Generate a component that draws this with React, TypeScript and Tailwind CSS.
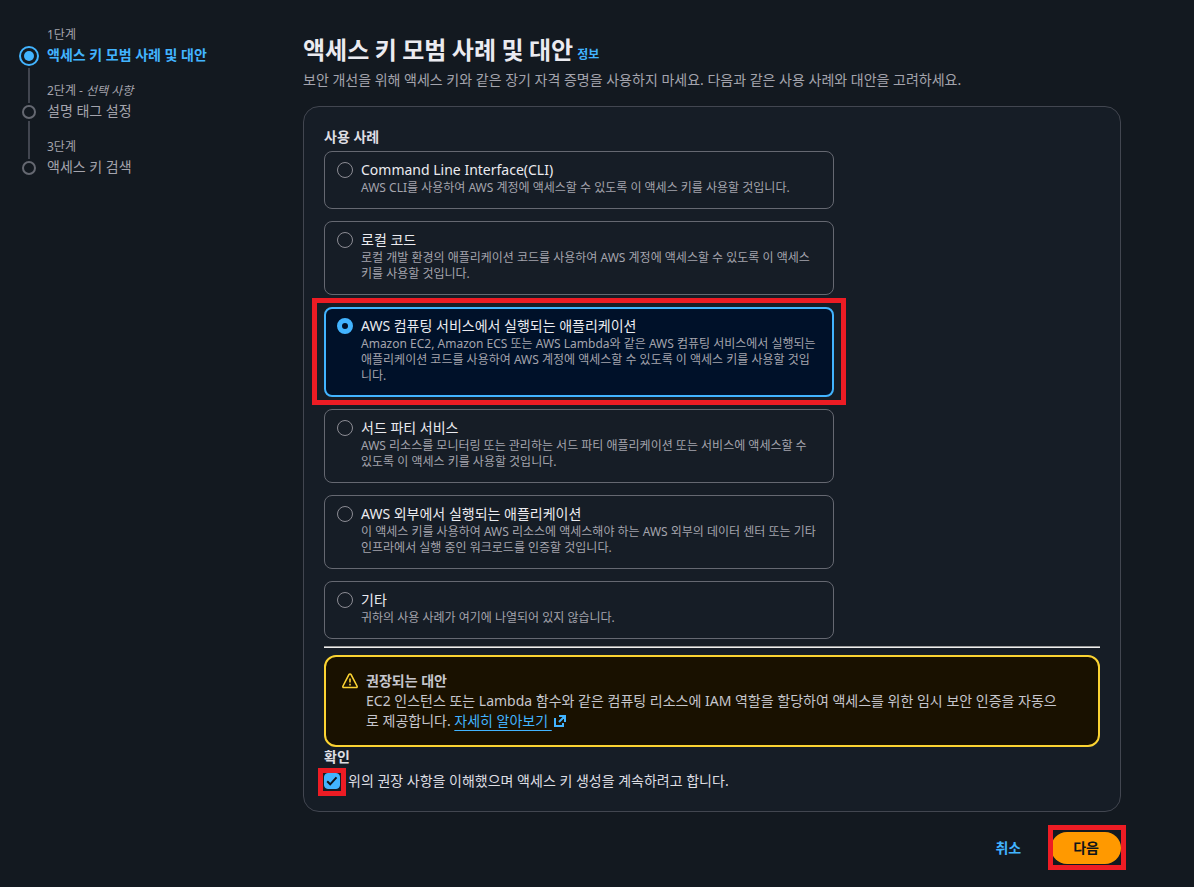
import React, { useState } from 'react';

const steps = [
    { label: '1단계', title: '액세스 키 모범 사례 및 대안', optional: false },
    { label: '2단계', title: '설명 태그 설정', optional: true },
    { label: '3단계', title: '액세스 키 검색', optional: false },
];

const useCases = [
    {
        id: 'cli',
        title: 'Command Line Interface(CLI)',
        description: 'AWS CLI를 사용하여 AWS 계정에 액세스할 수 있도록 이 액세스 키를 사용할 것입니다.',
    },
    {
        id: 'local',
        title: '로컬 코드',
        description: '로컬 개발 환경의 애플리케이션 코드를 사용하여 AWS 계정에 액세스할 수 있도록 이 액세스 키를 사용할 것입니다.',
    },
    {
        id: 'compute',
        title: 'AWS 컴퓨팅 서비스에서 실행되는 애플리케이션',
        description: 'Amazon EC2, Amazon ECS 또는 AWS Lambda와 같은 AWS 컴퓨팅 서비스에서 실행되는 애플리케이션 코드를 사용하여 AWS 계정에 액세스할 수 있도록 이 액세스 키를 사용할 것입니다.',
        highlighted: true,
    },
    {
        id: 'third-party',
        title: '서드 파티 서비스',
        description: 'AWS 리소스를 모니터링 또는 관리하는 서드 파티 애플리케이션 또는 서비스에 액세스할 수 있도록 이 액세스 키를 사용할 것입니다.',
    },
    {
        id: 'outside',
        title: 'AWS 외부에서 실행되는 애플리케이션',
        description: '이 액세스 키를 사용하여 AWS 리소스에 액세스해야 하는 AWS 외부의 데이터 센터 또는 기타 인프라에서 실행 중인 워크로드를 인증할 것입니다.',
    },
    {
        id: 'other',
        title: '기타',
        description: '귀하의 사용 사례가 여기에 나열되어 있지 않습니다.',
    },
];

const StepNav = () => (
    <nav aria-label="단계" className="w-[284px] shrink-0 pl-[19px] pt-[25px]">
        <ol>
            {steps.map((step, i) => {
                const active = i === 0;
                const last = i === steps.length - 1;
                return (
                    <li key={step.label} className="flex gap-2">
                        <div className="flex w-5 flex-col items-center">
                            {active ? (
                                <span className="mt-[21px] flex size-5 shrink-0 items-center justify-center rounded-full border-2 border-[#42b4ff]">
                                    <span className="size-2.5 rounded-full bg-[#42b4ff]" />
                                </span>
                            ) : (
                                <>
                                    <span className="h-[22px] w-0.5 shrink-0 bg-[#424650]" />
                                    <span className="mt-0.5 size-3.5 shrink-0 rounded-full border-2 border-[#656871]" />
                                </>
                            )}
                            {!last && <span className="mt-0.5 w-0.5 flex-1 bg-[#424650]" />}
                        </div>
                        <div className="pb-4">
                            <div className="text-xs leading-5 text-[#a4a4ad]">
                                {step.label}
                                {step.optional && <> - <i>선택 사항</i></>}
                            </div>
                            <div
                                aria-current={active ? 'step' : undefined}
                                className={`text-sm leading-5 ${active ? 'font-bold text-[#42b4ff]' : 'text-[#a4a4ad]'}`}
                            >
                                {step.title}
                            </div>
                        </div>
                    </li>
                );
            })}
        </ol>
    </nav>
);

const WarningIcon = () => (
    <svg viewBox="0 0 16 16" className="mt-0.5 size-4 shrink-0" fill="none" stroke="#fbd332" strokeWidth="1.6" aria-hidden="true">
        <path d="M6.9 1.6 1 13c-.4.8 0 1.5.8 1.5h12.4c.8 0 1.2-.7.8-1.5L9.1 1.6c-.5-.9-1.7-.9-2.2 0Z" />
        <path d="M8 5.5v4M8 10.8v1.8" />
    </svg>
);

const ExternalIcon = () => (
    <svg viewBox="0 0 16 16" className="inline size-4 align-[-3px]" fill="none" stroke="#42b4ff" strokeWidth="2" aria-hidden="true">
        <path d="M7 3h6v6M13 3 7 9M3 5v8h8v-3" />
    </svg>
);

const App = () => {
    const [selected, setSelected] = useState('compute');
    const [confirmed, setConfirmed] = useState(true);

    return (
        <div className="flex min-h-screen bg-[#131920] font-['Noto_Sans','Noto_Sans_CJK_KR',sans-serif] text-sm leading-5 text-[#dedee3]">
            <StepNav />

            <main className="mr-[73px] min-w-0 flex-1 pb-4 pl-[19px] pt-[34px]">
                <div className="flex items-baseline gap-1">
                    <h1 className="font-['Noto_Sans_CJK_KR',sans-serif] text-2xl leading-[30px] font-bold text-[#ebebf0]">액세스 키 모범 사례 및 대안</h1>
                    <a href="#info" className="text-xs font-bold text-[#42b4ff]">정보</a>
                </div>
                <p className="mt-1.5 text-[#a4a4ad]">
                    보안 개선을 위해 액세스 키와 같은 장기 자격 증명을 사용하지 마세요. 다음과 같은 사용 사례와 대안을 고려하세요.
                </p>

                <section className="mt-4 rounded-2xl border border-[#424650] bg-[#161d26] p-5">
                    <fieldset className="max-w-[510px]">
                        <legend className="mb-1 font-bold">사용 사례</legend>
                        <div className="flex flex-col gap-3">
                            {useCases.map((item) => {
                                const checked = selected === item.id;
                                return (
                                    <label
                                        key={item.id}
                                        className={`relative flex gap-2 rounded-lg ${
                                            checked
                                                ? 'border-2 border-[#42b4ff] bg-[#001129] pt-[7px] pr-[15px] pb-[11px] pl-[11px]'
                                                : 'border border-[#656871] pt-2 pr-4 pb-3 pl-3'
                                        }`}
                                    >
                                        <input
                                            type="radio"
                                            name="use-case"
                                            value={item.id}
                                            checked={checked}
                                            onChange={() => setSelected(item.id)}
                                            className="mt-0.5 size-4 shrink-0 appearance-none rounded-full border border-[#8c8c94] checked:border-[5px] checked:border-[#42b4ff]"
                                        />
                                        <span>
                                            <span className="block text-[#ebebf0]">{item.title}</span>
                                            <span className="block text-xs text-[#a4a4ad]">{item.description}</span>
                                        </span>
                                        {item.highlighted && (
                                            <span className="pointer-events-none absolute -inset-x-3.5 -top-[11px] -bottom-2.5 border-[5px] border-[#ed1c24]" />
                                        )}
                                    </label>
                                );
                            })}
                        </div>
                    </fieldset>

                    <hr className="my-[7px] h-0.5 border-t border-b border-t-[#9a9a9a] border-b-[#eeeeee]" />

                    <div className="flex gap-2 rounded-xl border-2 border-[#fbd332] bg-[#191100] py-3.5 pr-10 pl-4 text-[#c6c6cd]">
                        <WarningIcon />
                        <div>
                            <div className="font-bold">권장되는 대안</div>
                            <div>
                                EC2 인스턴스 또는 Lambda 함수와 같은 컴퓨팅 리소스에 IAM 역할을 할당하여 액세스를 위한 임시 보안 인증을 자동으로 제공합니다.{' '}
                                <a href="#learn-more" className="text-[#42b4ff] underline decoration-1 underline-offset-4">
                                    자세히 알아보기&nbsp;
                                    <ExternalIcon />
                                </a>
                            </div>
                        </div>
                    </div>

                    <div className="font-bold">확인</div>
                    <label className="mt-1 flex gap-2">
                        <span className="relative mt-0.5 size-4 shrink-0">
                            <input
                                type="checkbox"
                                checked={confirmed}
                                onChange={(e) => setConfirmed(e.target.checked)}
                                className="block size-4 appearance-none rounded-sm border border-[#8c8c94] checked:border-[#42b4ff] checked:bg-[#42b4ff]"
                            />
                            {confirmed && (
                                <svg viewBox="0 0 16 16" className="pointer-events-none absolute inset-0 size-4" fill="none" stroke="#0f141a" strokeWidth="2" aria-hidden="true">
                                    <path d="m3.2 8.3 3 3 6.3-7" />
                                </svg>
                            )}
                            <span className="pointer-events-none absolute -inset-x-1.5 -top-[5px] -bottom-[7px] border-[5px] border-[#ed1c24]" />
                        </span>
                        <span>위의 권장 사항을 이해했으며 액세스 키 생성을 계속하려고 합니다.</span>
                    </label>
                </section>

                <div className="mt-5 flex justify-end gap-2">
                    <button type="button" className="h-8 rounded-full px-[22px] font-bold text-[#42b4ff]">취소</button>
                    <button type="button" className="relative h-8 rounded-full bg-[#ff9900] px-[22px] font-bold text-[#0f141a]">
                        다음
                        <span className="pointer-events-none absolute -top-[7px] -right-[5px] -bottom-1.5 -left-[3px] border-[5px] border-[#ed1c24]" />
                    </button>
                </div>
            </main>
        </div>
    );
};

export default App;
